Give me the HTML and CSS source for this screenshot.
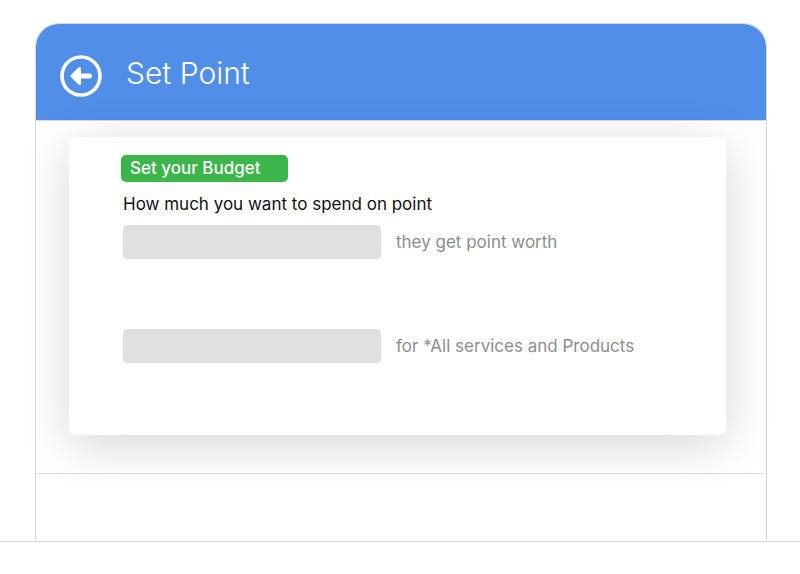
FILE: index.html
```html
<!DOCTYPE html>
<html lang="en">
<head>
<meta charset="UTF-8">
<meta name="viewport" content="width=device-width, initial-scale=1.0">
<title>Set Point</title>
<link rel="stylesheet" href="styles.css">
</head>
<body>
<div class="screen">
    <div class="panel">
        <header class="header">
            <a class="back" href="#" aria-label="Back">
                <svg width="42" height="42" viewBox="0 0 42 42">
                    <circle cx="21" cy="21" r="19" fill="none" stroke="#fff" stroke-width="3.6"/>
                    <path d="M12 21L19.5 13.5V28.5Z" fill="#fff" stroke="#fff" stroke-width="3" stroke-linejoin="round"/>
                    <path d="M19 21H29.5" stroke="#fff" stroke-width="5" stroke-linecap="round"/>
                </svg>
            </a>
            <h1>Set Point</h1>
        </header>

        <main class="content">
            <form class="card">
                <h2 class="badge">Set your Budget</h2>
                <p class="question">How much you want to spend on point</p>
                <div class="row">
                    <input type="text" id="budget">
                    <label for="budget">they get point worth</label>
                </div>
                <div class="row">
                    <input type="text" id="worth">
                    <label for="worth">for *All services and Products</label>
                </div>
            </form>
        </main>

        <div class="footer"></div>
    </div>
</div>
</body>
</html>
```
FILE: styles.css
```css
* {
    box-sizing: border-box;
}

body {
    margin: 0;
    background-color: #fff;
    font-family: Inter, "Liberation Sans", sans-serif;
    font-size: 17px;
    line-height: 24px;
}

.screen {
    padding: 23px 33px 0 35px;
    border-bottom: 1px solid #d6d6d6;
}

.panel {
    border: 1px solid #d9d9d9;
    border-bottom: none;
    border-radius: 24px 24px 0 0;
}

.header {
    display: flex;
    align-items: center;
    gap: 24px;
    height: 96px;
    padding: 8px 24px 0;
    background-color: #508ee8;
    border-radius: 23px 23px 0 0;
}

.back {
    display: flex;
}

h1 {
    margin: 0 0 6px;
    color: #fff;
    font-size: 30px;
    font-weight: 300;
    line-height: 36px;
}

.content {
    padding: 16px 40px 38px 33px;
    border-top: 1px solid #d9d9d9;
    border-bottom: 1px solid #dfdfdf;
}

.card {
    padding: 18px 52px 72px;
    background-color: #fff;
    border-radius: 7px;
    box-shadow: 0 10px 50px rgba(0, 0, 0, 0.16);
}

.badge {
    width: 167px;
    margin: 0 0 10px;
    padding: 1px 9px 2px;
    color: #fff;
    background-color: #3cb54a;
    border-radius: 5px;
    font-size: 17px;
    font-weight: 500;
}

.question {
    margin: 0 0 9px;
    padding-left: 2px;
    color: #111;
}

.row {
    display: flex;
    align-items: center;
    gap: 15px;
    padding-left: 2px;
}

.row + .row {
    margin-top: 70px;
}

.row input {
    width: 258px;
    height: 34px;
    padding: 0 10px;
    border: none;
    border-radius: 4px;
    background-color: #e0e0e0;
    font: inherit;
}

.row label {
    color: #8e8e8e;
}

.footer {
    height: 67px;
}
```
